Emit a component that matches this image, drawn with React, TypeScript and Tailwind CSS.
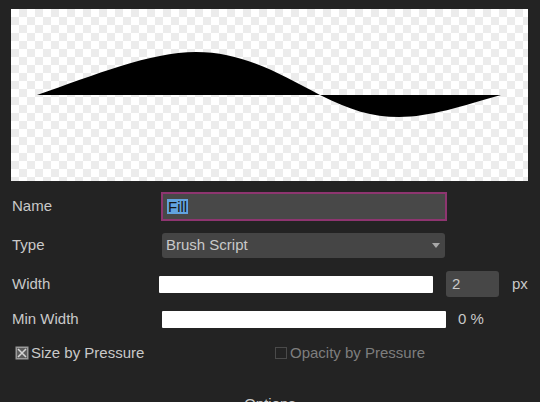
import React from "react";

/**
 * Brush editor panel — stroke preview on a checkerboard, then name/type/width
 * fields and the pressure toggles.
 */

const font = "font-['Liberation_Sans',Arial,sans-serif]";

function Preview() {
  return (
    <div className="mx-[11px] mt-[9px] h-[172px] w-[517px] bg-[image:repeating-conic-gradient(#ececec_0_25%,#ffffff_0_50%)] bg-[length:16px_16px]">
      <svg width="517" height="172" viewBox="11 9 517 172">
        <path
          d="M37,95 C95,75 150,52 196,52 C243,52 280,74 320,95 C350,110 372,117 399,117 C430,117 462,106 501,95 Z"
          fill="#000"
        />
      </svg>
    </div>
  );
}

function Label({ children }: { children: React.ReactNode }) {
  return <span className="w-[149px] shrink-0 text-[15px] text-[#c9c9c9]">{children}</span>;
}

function CheckedBox() {
  return (
    <svg width="14" height="14" viewBox="0 0 14 14" className="shrink-0">
      <rect x="0.5" y="0.5" width="13" height="13" fill="#9a9a9a" />
      <rect x="2" y="2" width="10" height="10" fill="#5c5c5c" />
      <path d="M3,3 L11,11 M11,3 L3,11" stroke="#d4d4d4" strokeWidth="1.6" />
    </svg>
  );
}

export default function App() {
  return (
    <div className={`h-[402px] w-[540px] overflow-hidden bg-[#232323] ${font}`}>
      <Preview />

      {/* Name */}
      <div className="mt-[11px] flex h-[29px] items-center pl-[12px]">
        <Label>Name</Label>
        <div className="flex h-[29px] w-[286px] items-center border-2 border-[#8e3570] bg-[#484848] pl-[4px]">
          <span className="bg-[#62a3e0] px-[1px] text-[15px] leading-[15px] text-[#161616]">Fill</span>
        </div>
      </div>

      {/* Type */}
      <div className="mt-[12px] flex h-[25px] items-center pl-[12px]">
        <Label>Type</Label>
        <div className="ml-[1px] flex h-[25px] w-[283px] items-center justify-between rounded-[3px] bg-[#454545] pl-[4px] pr-[5px]">
          <span className="text-[15px] text-[#c9c9c9]">Brush Script</span>
          <svg width="8" height="5" viewBox="0 0 8 5">
            <path d="M0,0 L8,0 L4,5 Z" fill="#a8a8a8" />
          </svg>
        </div>
      </div>

      {/* Width */}
      <div className="mt-[13px] flex h-[26px] items-center pl-[12px]">
        <span className="w-[147px] shrink-0 text-[15px] text-[#c9c9c9]">Width</span>
        <div className="h-[17px] w-[274px] rounded-[1px] bg-white" />
        <div className="ml-[13px] flex h-[26px] w-[53px] items-center rounded-[3px] bg-[#474747] pl-[6px] text-[15px] text-[#c9c9c9]">
          2
        </div>
        <span className="ml-[13px] text-[15px] text-[#c9c9c9]">px</span>
      </div>

      {/* Min Width */}
      <div className="mt-[14px] flex h-[17px] items-center pl-[12px]">
        <span className="w-[150px] shrink-0 text-[15px] text-[#c9c9c9]">Min Width</span>
        <div className="h-[17px] w-[284px] rounded-[1px] bg-white" />
        <span className="ml-[12px] text-[15px] text-[#c9c9c9]">0 %</span>
      </div>

      {/* Pressure toggles */}
      <div className="mt-[15px] flex h-[20px] items-center">
        <div className="flex w-[275px] items-center gap-[2px] pl-[15px]">
          <CheckedBox />
          <span className="text-[15px] text-[#c9c9c9]">Size by Pressure</span>
        </div>
        <div className="flex items-center gap-[3px]">
          <span className="h-[12px] w-[12px] shrink-0 border border-[#4a4a4a]" />
          <span className="text-[15px] text-[#7e7e7e]">Opacity by Pressure</span>
        </div>
      </div>

      <p className="mt-[30px] text-center text-[15px] text-[#c9c9c9]">Options</p>
    </div>
  );
}
